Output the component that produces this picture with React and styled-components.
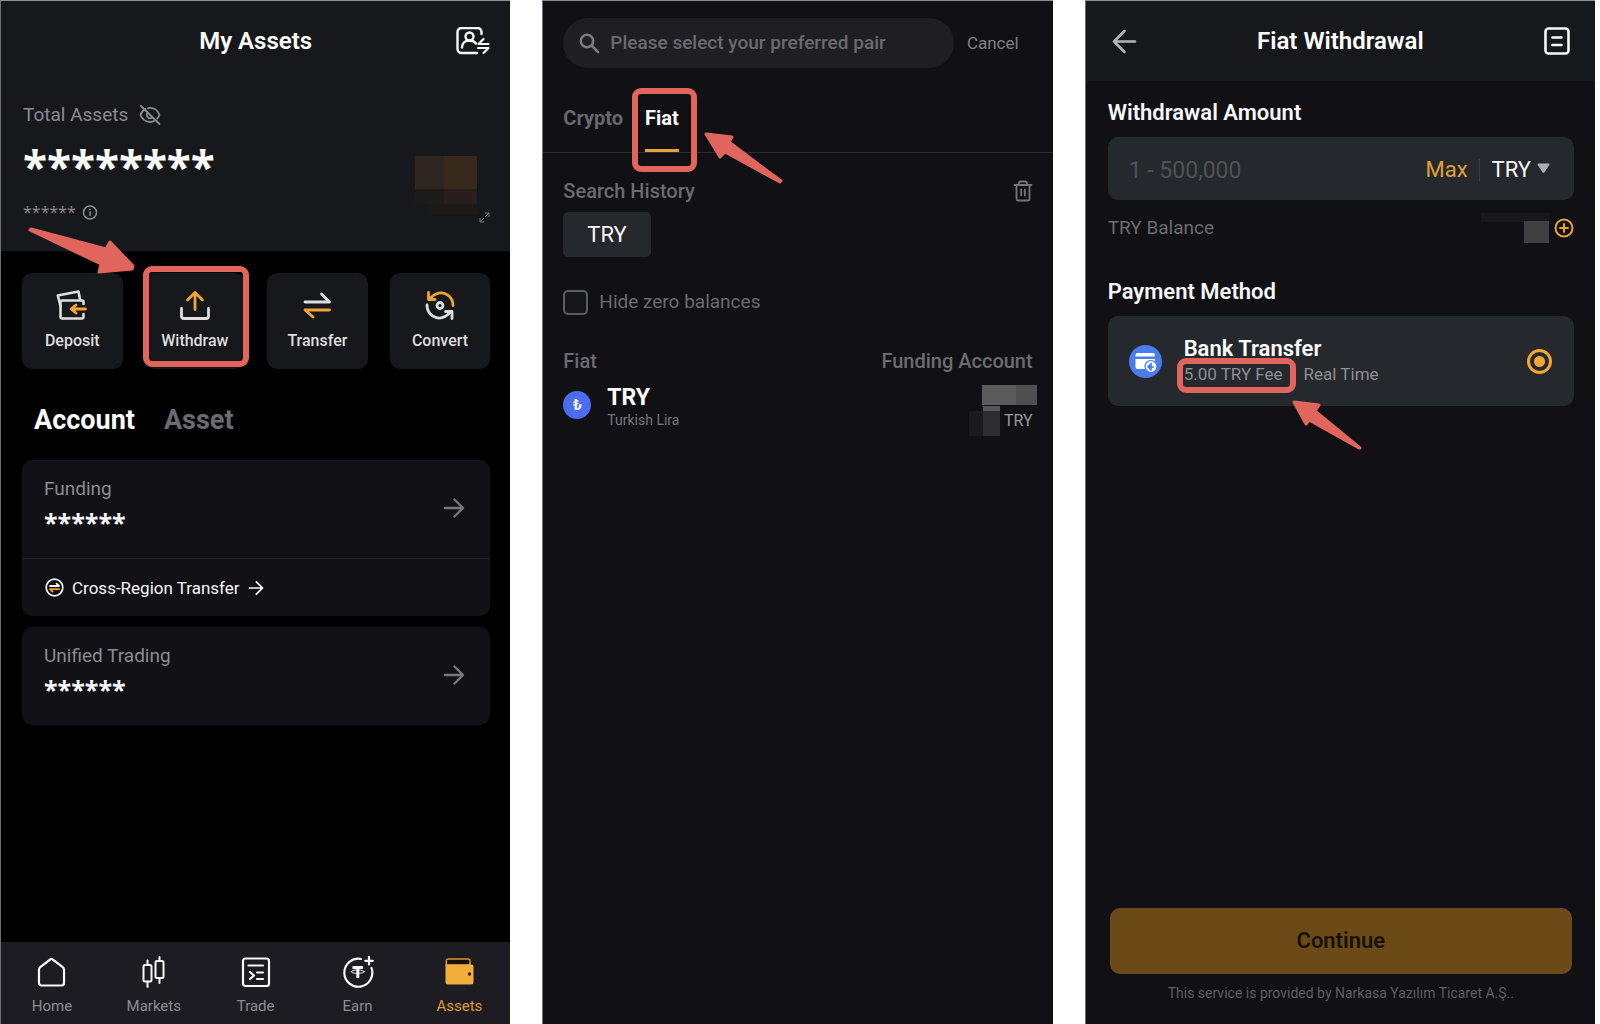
import { useState } from 'react';
import styled, { createGlobalStyle, css } from 'styled-components';

const COLORS = {
  screen: '#101015',
  header: '#17181c',
  card: '#111116',
  field: '#25282c',
  nav: '#1c1c22',
  orange: '#f0a535',
  mark: '#e0655d',
  white: '#f7f7f8',
  grey: '#8c8c91',
  dim: '#6b6b70',
};

const GlobalStyle = createGlobalStyle`
  * {
    box-sizing: border-box;
  }
  body {
    margin: 0;
    background: #ffffff;
    font-family: Roboto, "Open Sans", sans-serif;
    color: ${COLORS.white};
  }
  button, input, select {
    font: inherit;
    color: inherit;
    margin: 0;
    padding: 0;
    border: none;
    background: transparent;
  }
  button, select {
    cursor: pointer;
  }
  h1, h2, p {
    margin: 0;
  }
  svg {
    display: block;
    flex: none;
  }
`;

const Page = styled.div`
  display: grid;
  grid-template-columns: repeat(3, 1fr);
  column-gap: 32px;
  padding-right: 5px;
  min-height: 100vh;
`;

const Screen = styled.main`
  display: flex;
  flex-direction: column;
  min-width: 0;
  background: ${({ $black }) => ($black ? '#000000' : COLORS.screen)};
  border-top: 1px solid #8e9191;
  border-left: 1px solid #6d7070;
`;

const TitleBar = styled.header`
  display: grid;
  grid-template-columns: 1fr auto 1fr;
  align-items: center;
  height: 80px;
  padding: 0 ${({ $inset }) => $inset || 20}px;
  background: ${COLORS.header};
`;

const Title = styled.h1`
  grid-column: 2;
  font-size: 24px;
  line-height: 32px;
  font-weight: 600;
  color: #ffffff;
`;

const IconButton = styled.button`
  display: flex;
  justify-self: ${({ $end }) => ($end ? 'end' : 'start')};
  color: ${({ $color }) => $color || COLORS.white};
`;

/* red frame drawn round the step to follow */
const Marked = css`
  position: relative;
  &::after {
    content: "";
    position: absolute;
    border: 6px solid ${COLORS.mark};
    border-radius: 9px;
    pointer-events: none;
  }
`;

const Arrow = styled.svg`
  position: absolute;
  z-index: 2;
  fill: ${COLORS.mark};
  stroke: ${COLORS.mark};
  stroke-width: 3;
  stroke-linejoin: round;
  pointer-events: none;
`;

/* ---------- My Assets ---------- */

const Overview = styled.section`
  display: flex;
  justify-content: space-between;
  padding: 22px 20px 27px 22px;
  background: ${COLORS.header};
`;

const Row = styled.div`
  display: flex;
  align-items: center;
  gap: ${({ $gap }) => $gap || 0}px;
`;

const Muted = styled.span`
  font-size: 19px;
  line-height: 24px;
  color: ${COLORS.grey};
`;

const BigStars = styled.p`
  margin: 15px 0 10px;
  font-family: "Open Sans", "Noto Sans", sans-serif;
  font-size: 44px;
  line-height: 48px;
  font-weight: 700;
  color: #ffffff;
`;

const SmallStars = styled.span`
  font-family: "Open Sans", "Noto Sans", sans-serif;
  font-size: 16px;
  line-height: 24px;
  color: ${COLORS.grey};
`;

const Chart = styled.svg`
  align-self: flex-end;
`;

const Actions = styled.div`
  display: grid;
  grid-template-columns: repeat(4, 1fr);
  gap: 22px;
  padding: 22px 20px 0 21px;
`;

const Action = styled.button`
  display: flex;
  flex-direction: column;
  align-items: center;
  gap: 10px;
  height: 96px;
  padding-top: 16px;
  border-radius: 10px;
  background: ${COLORS.header};
  font-size: 16px;
  line-height: 20px;
  font-weight: 500;
  color: #dededf;
  ${({ $marked }) => $marked && Marked}
  &::after {
    inset: -7px -4px 2px -2px;
  }
`;

const WithdrawArrow = styled(Arrow)`
  left: -118px;
  top: -49px;
`;

const AccountTabs = styled.nav`
  display: flex;
  gap: 29px;
  padding: 33px 33px 22px;
`;

const AccountTab = styled.button`
  font-size: 27px;
  line-height: 36px;
  font-weight: 700;
  color: ${({ $active }) => ($active ? '#ffffff' : COLORS.dim)};
`;

const Accounts = styled.div`
  display: flex;
  flex-direction: column;
  gap: 11px;
  padding: 0 20px 0 21px;
`;

const AccountCard = styled.section`
  border-radius: 10px;
  background: ${COLORS.card};
`;

const AccountMain = styled.div`
  display: flex;
  align-items: center;
  justify-content: space-between;
  height: 98px;
  padding: 0 25px 2px 22px;
`;

const AccountText = styled.div`
  padding-bottom: 5px;
`;

const AccountStars = styled.p`
  margin-top: 9px;
  font-family: "Open Sans", "Noto Sans", sans-serif;
  font-size: 25px;
  line-height: 24px;
  font-weight: 700;
`;

const CrossRegion = styled.a`
  display: flex;
  align-items: center;
  gap: 8px;
  height: 58px;
  padding: 0 23px;
  border-top: 1px solid #26262b;
  font-size: 17px;
  line-height: 24px;
  color: ${COLORS.white};
  text-decoration: none;
`;

const BottomNav = styled.nav`
  display: grid;
  grid-template-columns: repeat(5, 1fr);
  margin-top: auto;
  height: 82px;
  padding-top: 14px;
  background: ${COLORS.nav};
`;

const NavItem = styled.button`
  display: flex;
  flex-direction: column;
  align-items: center;
  gap: 8px;
  height: 60px;
  font-size: 15px;
  line-height: 20px;
  color: ${({ $active }) => ($active ? '#e09a2e' : COLORS.grey)};
`;

/* ---------- Select currency ---------- */

const SearchRow = styled.div`
  display: flex;
  align-items: center;
  gap: 13px;
  padding: 17px 34px 0 20px;
`;

const SearchBox = styled.label`
  flex: 1;
  display: flex;
  align-items: center;
  gap: 10px;
  height: 50px;
  padding: 0 16px;
  border-radius: 25px;
  background: #1e1e23;
  color: #7c7c80;
`;

const SearchInput = styled.input`
  flex: 1;
  min-width: 0;
  font-size: 19px;
  line-height: 24px;
  font-weight: 500;
  outline: none;
  &::placeholder {
    color: #6b6b6f;
    opacity: 1;
  }
`;

const CancelButton = styled.button`
  font-size: 17px;
  line-height: 24px;
  color: #808084;
`;

const KindTabs = styled.nav`
  display: flex;
  gap: 22px;
  margin-top: 21px;
  padding-left: 20px;
  border-bottom: 1px solid #2b2b2f;
`;

const KindTab = styled.button`
  height: 63px;
  padding-bottom: 3px;
  border-bottom: 3px solid ${({ $active }) => ($active ? '#e6a23c' : 'transparent')};
  font-size: 20px;
  line-height: 24px;
  font-weight: 700;
  color: ${({ $active }) => ($active ? '#ffffff' : '#67676c')};
  ${({ $marked }) => $marked && Marked}
  &::after {
    inset: -1px -18px -23px -13px;
  }
`;

const FiatArrow = styled(Arrow)`
  left: 57px;
  top: 40px;
`;

const Body = styled.div`
  padding: 26px 20px 0;
`;

const Between = styled.div`
  display: flex;
  align-items: center;
  justify-content: space-between;
`;

const HistoryTitle = styled.h2`
  font-size: 20px;
  line-height: 24px;
  font-weight: 500;
  color: ${COLORS.dim};
`;

const Chip = styled.button`
  display: block;
  height: 45px;
  margin-top: 9px;
  padding: 0 24px;
  border-radius: 5px;
  background: ${COLORS.field};
  font-size: 22px;
  line-height: 28px;
`;

const CheckLabel = styled.label`
  display: flex;
  align-items: center;
  gap: 11px;
  margin-top: 32px;
  font-size: 19px;
  line-height: 26px;
  color: ${COLORS.dim};
`;

const Checkbox = styled.input`
  appearance: none;
  width: 25px;
  height: 25px;
  border: 2px solid #5d5d61;
  border-radius: 5px;
  background: #15171a;
  &:checked {
    background: ${COLORS.orange};
  }
`;

const CoinTable = styled.table`
  width: 100%;
  margin-top: 34px;
  border-collapse: collapse;
  th {
    padding: 0;
    text-align: left;
    font-size: 20px;
    line-height: 24px;
    font-weight: 500;
    color: ${COLORS.dim};
  }
  th:last-child {
    text-align: right;
  }
  td {
    padding: 12px 0 0;
    vertical-align: top;
  }
`;

const CoinName = styled.div`
  font-size: 23px;
  line-height: 26px;
  font-weight: 700;
  color: #ffffff;
`;

const CoinLabel = styled.div`
  font-size: 14px;
  line-height: 18px;
  color: #77777b;
`;

const CoinBadge = styled.span`
  display: flex;
  align-items: center;
  justify-content: center;
  width: 28px;
  height: 28px;
  margin-bottom: 4px;
  border-radius: 50%;
  background: #4c6cf0;
  font-size: 15px;
  line-height: 20px;
  font-weight: 700;
`;

const Holding = styled.div`
  display: flex;
  flex-direction: column;
  align-items: flex-end;
`;

const HiddenAmount = styled.svg`
  margin-right: -4px;
`;

const HoldingUnit = styled.span`
  font-size: 16px;
  line-height: 24px;
  color: #9a9a9e;
`;

/* ---------- Fiat Withdrawal ---------- */

const Form = styled.form`
  flex: 1;
  display: flex;
  flex-direction: column;
  padding: 18px 21px 0 22px;
`;

const FieldTitle = styled.h2`
  margin-bottom: 10px;
  font-size: 22px;
  line-height: 28px;
  font-weight: 600;
`;

const AmountBox = styled.div`
  display: flex;
  align-items: center;
  height: 63px;
  padding: 2px 24px 0 21px;
  border-radius: 10px;
  background: ${COLORS.field};
  font-size: 22px;
  line-height: 28px;
`;

const AmountInput = styled.input`
  flex: 1;
  min-width: 0;
  padding-top: 3px;
  font-size: 23px;
  outline: none;
  &::placeholder {
    color: #505256;
    opacity: 1;
  }
`;

const MaxButton = styled.button`
  padding-right: 11px;
  border-right: 1px solid #3b3e42;
  line-height: 22px;
  color: #e0a03a;
`;

const CurrencyPicker = styled.label`
  display: flex;
  align-items: center;
  gap: 6px;
  padding-left: 12px;
`;

const CurrencySelect = styled.select`
  appearance: none;
  field-sizing: content;
  outline: none;
`;

const BalanceRow = styled(Between)`
  height: 30px;
  margin: 13px 0 35px;
`;

const BalanceLabel = styled.span`
  font-size: 19px;
  line-height: 24px;
  color: ${COLORS.dim};
`;

const Method = styled.label`
  display: flex;
  align-items: center;
  height: 90px;
  padding: 0 22px 0 21px;
  border-radius: 10px;
  background: ${COLORS.field};
  cursor: pointer;
`;

const MethodText = styled.div`
  flex: 1;
  margin-left: 22px;
`;

const MethodName = styled.div`
  font-size: 22px;
  line-height: 26px;
  font-weight: 600;
  color: #ffffff;
`;

const MethodInfo = styled.div`
  display: flex;
  gap: 21px;
  font-size: 17px;
  line-height: 24px;
  color: #8e9095;
`;

const Fee = styled.span`
  ${Marked}
  &::after {
    inset: -4px -13px -7px -7px;
  }
`;

const FeeArrow = styled(Arrow)`
  left: 107px;
  top: 36px;
`;

const Radio = styled.input`
  appearance: none;
  width: 25px;
  height: 25px;
  border: 3px solid ${COLORS.orange};
  border-radius: 50%;
  &:checked {
    background: radial-gradient(circle, ${COLORS.orange} 5px, transparent 6px);
  }
`;

const Footer = styled.footer`
  margin-top: auto;
  padding: 0 2px 21px;
  text-align: center;
`;

const ContinueButton = styled.button`
  width: 100%;
  height: 66px;
  border-radius: 10px;
  background: #6b4a18;
  font-size: 22px;
  line-height: 28px;
  font-weight: 600;
  color: #17110a;
`;

const Note = styled.p`
  margin-top: 9px;
  font-size: 14px;
  line-height: 20px;
  color: #5f5f64;
`;

/* ---------- icons ---------- */

const stroke = {
  fill: 'none',
  stroke: 'currentColor',
  strokeLinecap: 'round',
  strokeLinejoin: 'round',
};

const SwitchUserIcon = () => (
  <svg width="34" height="28" viewBox="0 0 34 28" strokeWidth="2.4" {...stroke}>
    <path d="M25.500 7V5a4 4 0 0 0-4-4H5.500a4 4 0 0 0-4 4v17a4 4 0 0 0 4 4H21" />
    <circle cx="13.500" cy="9.500" r="4" />
    <path d="M6 20.500c0-4.500 3-7 7.500-7 3 0 5 1 6.500 3" />
    <path d="M22.500 17H32.500M22.500 17l5-5M22 21h10.500l-5 5" strokeWidth="2.200" />
  </svg>
);

const EyeOffIcon = () => (
  <svg width="22" height="20" viewBox="0 0 22 20" strokeWidth="1.800" color="#8c8c91" {...stroke}>
    <path d="M6.500 4C3.800 5.500 2 8 1.500 10c1.200 3.600 5 7 9.500 7 1.800 0 3.500-.5 5-1.400M9 3.100C15 2.200 19 5.600 20.500 10c-.4 1.300-1.200 2.500-2.300 3.500" />
    <path d="M8.300 8.200a3.300 3.300 0 0 0 4.600 4.500M2 1l18.500 18" />
  </svg>
);

const InfoIcon = () => (
  <svg width="16" height="16" viewBox="0 0 16 16" strokeWidth="1.500" color="#8c8c91" {...stroke}>
    <circle cx="8" cy="8.500" r="6.500" />
    <path d="M8 8v3.500M8 5.300v.2" />
  </svg>
);

const DepositIcon = () => (
  <svg width="32" height="32" viewBox="0 0 32 32" strokeWidth="2.600" {...stroke}>
    <path d="M4.500 17 1.800 6.500 22.500 2.500l1.500 8" />
    <path d="M27.500 15v-2a1.500 1.500 0 0 0-1.500-1.500H6A1.500 1.500 0 0 0 4.500 13v15A1.500 1.500 0 0 0 6 29.500h20a1.500 1.500 0 0 0 1.500-1.500v-3" />
    <path d="M29.500 20H15.500M20 16l-4.800 4 4.800 4" stroke="#f0a535" strokeWidth="2.800" />
  </svg>
);

const WithdrawIcon = () => (
  <svg width="32" height="32" viewBox="0 0 32 32" strokeWidth="2.800" {...stroke}>
    <path d="M2.500 19.500V27a2.500 2.500 0 0 0 2.500 2.500h22a2.500 2.500 0 0 0 2.500-2.500v-7.500" />
    <path d="M16 20.500V3.500M8.500 11 16 3.500l7.500 7.500" stroke="#f0a535" />
  </svg>
);

const TransferIcon = () => (
  <svg width="32" height="32" viewBox="0 0 32 32" strokeWidth="2.800" {...stroke}>
    <path d="M4 13h24.500l-8-8" />
    <path d="M28.500 21H4l8 7" stroke="#f0a535" />
  </svg>
);

const ConvertIcon = () => (
  <svg width="32" height="32" viewBox="0 0 32 32" strokeWidth="2.800" {...stroke}>
    <circle cx="16" cy="16.500" r="3" />
    <path d="M3 16c0 10 10 16 18 11.500 2.500-1.300 4.500-3 6-5M21.500 22.500H28v7" />
    <path d="M29 16.500C29 7 20 1.500 12 5 9 6.300 6.500 8.500 5 10.500M4.500 3.500v7H11" stroke="#f0a535" />
  </svg>
);

const ArrowRight = ({ size = 22, color = '#77777b' }) => (
  <svg width={size} height={size} viewBox="0 0 22 22" strokeWidth="2.400" color={color} {...stroke}>
    <path d="M2 11h17.500M11.500 2.500 20 11l-8.500 8.500" />
  </svg>
);

const RegionIcon = () => (
  <svg width="19" height="19" viewBox="0 0 19 19" strokeWidth="1.700" {...stroke}>
    <circle cx="9.500" cy="9.500" r="8.300" />
    <path d="M5 8h9l-2.500-2.300" strokeWidth="1.800" />
    <path d="M14 11.200H5l2.500 2.300" strokeWidth="1.800" stroke="#f0a535" />
  </svg>
);

const HomeIcon = () => (
  <svg width="32" height="32" viewBox="0 0 32 32" strokeWidth="2.200" color="#f7f7f8" {...stroke}>
    <path d="M3 13.500c0-1 .4-1.800 1.200-2.400l10-7.600a2 2 0 0 1 2.500 0l10 7.600c.8.600 1.300 1.400 1.300 2.400V27a2.500 2.500 0 0 1-2.500 2.500h-20A2.500 2.500 0 0 1 3 27z" />
  </svg>
);

const MarketsIcon = () => (
  <svg width="32" height="32" viewBox="0 0 32 32" strokeWidth="2" color="#f7f7f8" {...stroke}>
    <rect x="5.500" y="9" width="8" height="16.500" rx="1.500" />
    <path d="M9.500 4.500V9M9.500 25.500V31" />
    <rect x="17.500" y="5" width="8" height="17" rx="1.500" />
    <path d="M21.500 1v4M21.500 22v5" />
  </svg>
);

const TradeIcon = () => (
  <svg width="32" height="32" viewBox="0 0 32 32" strokeWidth="2.200" color="#f7f7f8" {...stroke}>
    <rect x="3" y="2.500" width="26" height="27.500" rx="2.500" />
    <path d="M8.500 9.500h14.500M17 16.500h6M17 23h6M10 16l4 3.500-4 3.500" />
  </svg>
);

const EarnIcon = () => (
  <svg width="32" height="32" viewBox="0 0 32 32" strokeWidth="2.200" color="#f7f7f8" {...stroke}>
    <path d="M19 3A14 14 0 1 0 29.500 12" />
    <path d="M27 1v7.500M23.300 4.800h7.500" strokeWidth="2.200" />
    <path d="M10.500 11.500h10.500M15.800 11.500V22" strokeWidth="3" strokeLinecap="butt" />
    <ellipse cx="15.800" cy="15.700" rx="6.500" ry="1.700" strokeWidth="1" />
  </svg>
);

const WalletIcon = () => (
  <svg width="32" height="32" viewBox="0 0 32 32">
    <path d="M3.300 5a2 2 0 0 1 2-2H25a2 2 0 0 1 2 2v4H3.300z" fill="#15110a" stroke="#d99432" strokeWidth="1.500" />
    <path d="M2.500 8.500h26a2 2 0 0 1 2 2v15.500a2.500 2.500 0 0 1-2.500 2.500H5a2.500 2.500 0 0 1-2.500-2.500z" fill="#f2ae3d" />
    <circle cx="26.500" cy="18" r="1.700" fill="#2a1c08" />
  </svg>
);

const SearchIcon = () => (
  <svg width="21" height="21" viewBox="0 0 21 21" strokeWidth="2.500" {...stroke}>
    <circle cx="8" cy="8" r="6.200" />
    <path d="m12.500 12.500 6.500 6.500" />
  </svg>
);

const TrashIcon = () => (
  <svg width="20" height="22" viewBox="0 0 20 22" strokeWidth="1.800" color="#77777b" {...stroke}>
    <path d="M1.500 5h17M6 5V3a1.500 1.500 0 0 1 1.500-1.500h5A1.500 1.500 0 0 1 14 3v2" />
    <path d="M3.500 5v14a1.500 1.500 0 0 0 1.500 1.500h10a1.500 1.500 0 0 0 1.500-1.500V5M8.200 9.500v6M11.800 9.500v6" />
  </svg>
);

const BackIcon = () => (
  <svg width="26" height="26" viewBox="0 0 26 26" strokeWidth="2.500" {...stroke}>
    <path d="M24 13.500H3M13.500 3 3 13.500 13.500 24" />
  </svg>
);

const OrdersIcon = () => (
  <svg width="26" height="28" viewBox="0 0 26 28" strokeWidth="2.600" {...stroke}>
    <rect x="1.500" y="1.500" width="23" height="25" rx="3" />
    <path d="M8.500 10.500h9M8.500 18h9" />
  </svg>
);

const BankIcon = () => (
  <svg width="33" height="33" viewBox="0 0 33 33">
    <circle cx="16.500" cy="16.500" r="16.500" fill="#4a7cec" />
    <path d="M6.500 10a2 2 0 0 1 2-2h15.500a2 2 0 0 1 2 2v1.500H6.500zM6.500 14h19.500v3.500l-7 6.500H8.500a2 2 0 0 1-2-2z" fill="#ffffff" />
    <circle cx="22" cy="21.500" r="6" fill="#ffffff" stroke="#4a7cec" strokeWidth="1.200" />
    <path d="M25 22h-4.500M22 18.800l-3 3 3 3z" fill="#4a7cec" stroke="#4a7cec" strokeWidth="1.500" />
  </svg>
);

const PlusCircleIcon = () => (
  <svg width="20" height="20" viewBox="0 0 20 20" strokeWidth="2" {...stroke}>
    <circle cx="10" cy="10" r="8.500" />
    <path d="M10 6v8M6 10h8" />
  </svg>
);

const ACTIONS = [
  { label: 'Deposit', Icon: DepositIcon },
  { label: 'Withdraw', Icon: WithdrawIcon, marked: true },
  { label: 'Transfer', Icon: TransferIcon },
  { label: 'Convert', Icon: ConvertIcon },
];

const NAV = [
  { label: 'Home', Icon: HomeIcon },
  { label: 'Markets', Icon: MarketsIcon },
  { label: 'Trade', Icon: TradeIcon },
  { label: 'Earn', Icon: EarnIcon },
  { label: 'Assets', Icon: WalletIcon, active: true },
];

function MyAssets() {
  const [tab, setTab] = useState('Account');

  return (
    <Screen $black>
      <TitleBar>
        <Title>My Assets</Title>
        <IconButton $end aria-label="Switch account"><SwitchUserIcon /></IconButton>
      </TitleBar>
      <Overview>
        <div>
          <Row $gap={11}>
            <Muted>Total Assets</Muted>
            <IconButton aria-label="Show balance"><EyeOffIcon /></IconButton>
          </Row>
          <BigStars>********</BigStars>
          <Row $gap={6}>
            <SmallStars>******</SmallStars>
            <InfoIcon />
          </Row>
        </div>
        <Chart width="75" height="68" viewBox="0 0 75 68">
          <rect x="0" y="0" width="29" height="33" fill="#2e2520" />
          <rect x="29" y="0" width="33" height="33" fill="#372a1b" />
          <rect x="0" y="33" width="29" height="15" fill="#1d1b1a" />
          <rect x="29" y="33" width="33" height="15" fill="#261f1c" />
          <rect x="13" y="48" width="51" height="11" fill="#1b1a17" />
          <path d="M70 57h4v4M74 57l-4 4M65 62v4h4M65 66l4-4" fill="none" stroke="#77777b" />
        </Chart>
      </Overview>
      <Actions>
        {ACTIONS.map(({ label, Icon, marked }) => (
          <Action key={label} $marked={marked}>
            <Icon />
            {label}
            {marked && (
              <WithdrawArrow width="110" height="52" viewBox="0 0 110 52">
                <path d="M4 5 79 25 83 18 106 42 105 45 72 48 74 40 3 6z" />
              </WithdrawArrow>
            )}
          </Action>
        ))}
      </Actions>
      <AccountTabs>
        {['Account', 'Asset'].map((name) => (
          <AccountTab key={name} $active={tab === name} onClick={() => setTab(name)}>{name}</AccountTab>
        ))}
      </AccountTabs>
      <Accounts>
        <AccountCard>
          <AccountMain>
            <AccountText>
              <Muted>Funding</Muted>
              <AccountStars>******</AccountStars>
            </AccountText>
            <ArrowRight />
          </AccountMain>
          <CrossRegion href="#cross-region">
            <RegionIcon />
            Cross-Region Transfer
            <ArrowRight size={16} color="#f7f7f8" />
          </CrossRegion>
        </AccountCard>
        <AccountCard>
          <AccountMain>
            <AccountText>
              <Muted>Unified Trading</Muted>
              <AccountStars>******</AccountStars>
            </AccountText>
            <ArrowRight />
          </AccountMain>
        </AccountCard>
      </Accounts>
      <BottomNav>
        {NAV.map(({ label, Icon, active }) => (
          <NavItem key={label} $active={active}>
            <Icon />
            {label}
          </NavItem>
        ))}
      </BottomNav>
    </Screen>
  );
}

function SelectCurrency() {
  const [hideZero, setHideZero] = useState(false);

  return (
    <Screen>
      <SearchRow>
        <SearchBox>
          <SearchIcon />
          <SearchInput type="text" aria-label="Search" placeholder="Please select your preferred pair" />
        </SearchBox>
        <CancelButton>Cancel</CancelButton>
      </SearchRow>
      <KindTabs>
        <KindTab>Crypto</KindTab>
        <KindTab $active $marked>
          Fiat
          <FiatArrow width="86" height="58" viewBox="0 0 86 58">
            <path d="M4 5 30 8 27 13 79 52 78 53 23 23 18 28z" />
          </FiatArrow>
        </KindTab>
      </KindTabs>
      <Body>
        <Between>
          <HistoryTitle>Search History</HistoryTitle>
          <IconButton $end aria-label="Clear history"><TrashIcon /></IconButton>
        </Between>
        <Chip>TRY</Chip>
        <CheckLabel>
          <Checkbox type="checkbox" checked={hideZero} onChange={() => setHideZero(!hideZero)} />
          Hide zero balances
        </CheckLabel>
        <CoinTable>
          <thead>
            <tr>
              <th>Fiat</th>
              <th>Funding Account</th>
            </tr>
          </thead>
          <tbody>
            <tr>
              <td>
                <Row $gap={16}>
                  <CoinBadge>₺</CoinBadge>
                  <div>
                    <CoinName>TRY</CoinName>
                    <CoinLabel>Turkish Lira</CoinLabel>
                  </div>
                </Row>
              </td>
              <td>
                <Holding>
                  <HiddenAmount width="55" height="20" viewBox="0 0 55 20">
                    <rect width="34" height="20" fill="#5b5b5b" />
                    <rect x="34" width="21" height="20" fill="#4f4f50" />
                  </HiddenAmount>
                  <Row $gap={4}>
                    <svg width="31" height="31" viewBox="0 0 31 31">
                      <rect x="14" y="1" width="17" height="5" fill="#565658" />
                      <rect y="6" width="14" height="25" fill="#1a1a1f" />
                      <rect x="14" y="6" width="17" height="25" fill="#2d2d32" />
                    </svg>
                    <HoldingUnit>TRY</HoldingUnit>
                  </Row>
                </Holding>
              </td>
            </tr>
          </tbody>
        </CoinTable>
      </Body>
    </Screen>
  );
}

function FiatWithdrawal() {
  const [amount, setAmount] = useState('');

  return (
    <Screen>
      <TitleBar $inset={25}>
        <IconButton aria-label="Back" $color="#b4b5ba"><BackIcon /></IconButton>
        <Title>Fiat Withdrawal</Title>
        <IconButton $end aria-label="Orders"><OrdersIcon /></IconButton>
      </TitleBar>
      <Form onSubmit={(e) => e.preventDefault()}>
        <FieldTitle>Withdrawal Amount</FieldTitle>
        <AmountBox>
          <AmountInput
            type="text"
            aria-label="Withdrawal Amount"
            placeholder="1 - 500,000"
            value={amount}
            onChange={(e) => setAmount(e.target.value)}
          />
          <MaxButton type="button" onClick={() => setAmount('500,000')}>Max</MaxButton>
          <CurrencyPicker>
            <CurrencySelect aria-label="Currency">
              <option>TRY</option>
            </CurrencySelect>
            <svg width="13" height="13" viewBox="0 0 13 13">
              <path d="M1.500 1.500h10l-5 7.500z" fill="#a9adb5" stroke="#a9adb5" strokeWidth="2" strokeLinejoin="round" />
            </svg>
          </CurrencyPicker>
        </AmountBox>
        <BalanceRow>
          <BalanceLabel>TRY Balance</BalanceLabel>
          <Row $gap={5}>
            <svg width="68" height="30" viewBox="0 0 68 30">
              <rect width="68" height="9" fill="#17171c" />
              <rect x="43" y="8" width="25" height="22" fill="#404040" />
            </svg>
            <IconButton type="button" aria-label="Add funds" $color="#e6a336"><PlusCircleIcon /></IconButton>
          </Row>
        </BalanceRow>
        <FieldTitle>Payment Method</FieldTitle>
        <Method>
          <BankIcon />
          <MethodText>
            <MethodName>Bank Transfer</MethodName>
            <MethodInfo>
              <Fee>
                5.00 TRY Fee
                <FeeArrow width="76" height="55" viewBox="0 0 76 55">
                  <path d="M3 4 28 7 24 13 69 50 68 50 18 22 15 26z" />
                </FeeArrow>
              </Fee>
              <span>Real Time</span>
            </MethodInfo>
          </MethodText>
          <Radio type="radio" name="method" defaultChecked />
        </Method>
        <Footer>
          <ContinueButton disabled={!amount}>Continue</ContinueButton>
          <Note>This service is provided by Narkasa Yazılım Ticaret A.Ş..</Note>
        </Footer>
      </Form>
    </Screen>
  );
}

export default function App() {
  return (
    <>
      <GlobalStyle />
      <Page>
        <MyAssets />
        <SelectCurrency />
        <FiatWithdrawal />
      </Page>
    </>
  );
}
